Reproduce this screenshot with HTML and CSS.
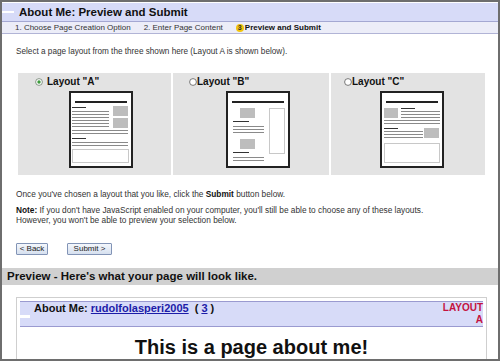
FILE: index.html
```html
<!DOCTYPE html>
<html>
<head>
<meta charset="utf-8">
<title>About Me: Preview and Submit</title>
<link rel="stylesheet" href="styles.css">
</head>
<body>
<div class="frame">
  <div class="hdr"><span class="stripe"></span><h1 class="title">About Me: Preview and Submit</h1></div>
  <div class="steps">
    <span>1. Choose Page Creation Option</span>
    <span>2. Enter Page Content</span>
    <span class="cur"><span class="num">3</span>Preview and Submit</span>
  </div>
  <p class="intro">Select a page layout from the three shown here (Layout A is shown below).</p>

  <div class="layouts">
    <div class="panel p1">
      <label class="opt">
        <svg class="radio" width="8" height="8" viewBox="0 0 8 8"><circle cx="4" cy="4" r="3.4" fill="#fff" stroke="#7a8a7a" stroke-width="0.9"/><circle cx="4" cy="4" r="1.7" fill="#3c9a3c"/></svg>
        <span>Layout "A"</span>
      </label>
      <div class="thumb">
        <svg width="64" height="77" viewBox="0 0 64 77" shape-rendering="crispEdges">
          <rect x="1" y="1" width="62" height="75" fill="#fff" stroke="#222" stroke-width="2"/>
          <rect x="6" y="10" width="52" height="2" fill="#222"/>
          <rect x="3" y="16" width="14" height="1" fill="#333"/>
          <rect x="3" y="20" width="37" height="1" fill="#8a8a8a"/>
          <rect x="3" y="23" width="37" height="1" fill="#8a8a8a"/>
          <rect x="3" y="26" width="37" height="1" fill="#8a8a8a"/>
          <rect x="3" y="29" width="37" height="1" fill="#8a8a8a"/>
          <rect x="3" y="32" width="37" height="1" fill="#8a8a8a"/>
          <rect x="3" y="35" width="37" height="1" fill="#8a8a8a"/>
          <rect x="44" y="15" width="15" height="10" fill="#bdbdbd"/>
          <rect x="44" y="27" width="15" height="10" fill="#bdbdbd"/>
          <rect x="3" y="39" width="56" height="1" fill="#8a8a8a"/>
          <rect x="3" y="42" width="56" height="1" fill="#8a8a8a"/>
          <rect x="3" y="47" width="14" height="1" fill="#333"/>
          <rect x="3" y="51" width="56" height="1" fill="#8a8a8a"/>
          <rect x="3" y="54" width="56" height="1" fill="#8a8a8a"/>
          <rect x="3.5" y="58.5" width="56" height="13" fill="none" stroke="#c8c8c8"/>
        </svg>
      </div>
    </div>
    <div class="panel p2">
      <label class="opt">
        <svg class="radio" width="8" height="8" viewBox="0 0 8 8"><circle cx="4" cy="4" r="3.4" fill="#fff" stroke="#6a6a6a" stroke-width="0.9"/></svg>
        <span>Layout "B"</span>
      </label>
      <div class="thumb">
        <svg width="64" height="77" viewBox="0 0 64 77" shape-rendering="crispEdges">
          <rect x="1" y="1" width="62" height="75" fill="#fff" stroke="#222" stroke-width="2"/>
          <rect x="6" y="10" width="52" height="2" fill="#222"/>
          <rect x="14" y="17" width="15" height="10" fill="#bdbdbd"/>
          <rect x="7" y="30" width="16" height="1" fill="#333"/>
          <rect x="7" y="35" width="31" height="1" fill="#8a8a8a"/>
          <rect x="7" y="38" width="31" height="1" fill="#8a8a8a"/>
          <rect x="7" y="41" width="31" height="1" fill="#8a8a8a"/>
          <rect x="43.5" y="17.5" width="15" height="45" fill="none" stroke="#c8c8c8"/>
          <rect x="14" y="48" width="15" height="10" fill="#bdbdbd"/>
          <rect x="7" y="61" width="16" height="1" fill="#333"/>
          <rect x="7" y="66" width="31" height="1" fill="#8a8a8a"/>
          <rect x="7" y="69" width="31" height="1" fill="#8a8a8a"/>
        </svg>
      </div>
    </div>
    <div class="panel p3">
      <label class="opt">
        <svg class="radio" width="8" height="8" viewBox="0 0 8 8"><circle cx="4" cy="4" r="3.4" fill="#fff" stroke="#6a6a6a" stroke-width="0.9"/></svg>
        <span>Layout "C"</span>
      </label>
      <div class="thumb">
        <svg width="64" height="77" viewBox="0 0 64 77" shape-rendering="crispEdges">
          <rect x="1" y="1" width="62" height="75" fill="#fff" stroke="#222" stroke-width="2"/>
          <rect x="6" y="10" width="52" height="2" fill="#222"/>
          <rect x="4" y="17" width="14" height="10" fill="#bdbdbd"/>
          <rect x="21" y="17" width="14" height="1" fill="#333"/>
          <rect x="21" y="20" width="39" height="1" fill="#8a8a8a"/>
          <rect x="21" y="23" width="39" height="1" fill="#8a8a8a"/>
          <rect x="21" y="26" width="39" height="1" fill="#8a8a8a"/>
          <rect x="4" y="29" width="56" height="1" fill="#8a8a8a"/>
          <rect x="4" y="32" width="56" height="1" fill="#8a8a8a"/>
          <rect x="4" y="37" width="14" height="1" fill="#333"/>
          <rect x="4" y="40" width="39" height="1" fill="#8a8a8a"/>
          <rect x="4" y="43" width="39" height="1" fill="#8a8a8a"/>
          <rect x="4" y="46" width="39" height="1" fill="#8a8a8a"/>
          <rect x="44" y="37" width="15" height="10" fill="#bdbdbd"/>
          <rect x="4.5" y="52.5" width="55" height="19" fill="none" stroke="#c8c8c8"/>
        </svg>
      </div>
    </div>
  </div>

  <p class="txt once">Once you've chosen a layout that you like, click the <b>Submit</b> button below.</p>
  <p class="txt note"><b>Note:</b> If you don't have JavaScript enabled on your computer, you'll still be able to choose any of these layouts.<br>However, you won't be able to preview your selection below.</p>

  <div class="btns">
    <button class="btn back" type="button">&lt; Back</button>
    <button class="btn submit" type="button">Submit &gt;</button>
  </div>

  <div class="pvbar">Preview - Here's what your page will look like.</div>

  <div class="pvbox">
    <div class="pvhead">
      <span class="stripe2"></span>
      <div class="pvtitle">About Me: <a href="#" class="lnk">rudolfolasperi2005</a><span class="paren">( <a href="#" class="lnk">3</a> )</span></div>
      <div class="lay">LAYOUT<br>A</div>
    </div>
    <h2 class="big">This is a page about me!</h2>
  </div>
</div>
</body>
</html>
```

FILE: styles.css
```css
* { box-sizing: border-box; margin: 0; padding: 0; }
body { margin: 0; font-family: "Liberation Sans", Arial, sans-serif; color: #222; background: #fff; }

.frame { width: 500px; height: 361px; border: 2px solid #6e6e6e; overflow: hidden; background: #fff; }

.hdr { margin-top: 1px; height: 19px; background: #d7dbf8; border-bottom: 1px solid #a4a8d2; display: flex; align-items: center; }
.stripe { width: 12px; height: 2px; background: #fff; flex: none; }
.title { font-size: 11.5px; font-weight: bold; margin-left: 5px; color: #111; line-height: 14px; }

.steps { height: 12px; background: #ecedf8; border-bottom: 1px solid #b1b4d6; display: flex; align-items: center; padding-left: 13px; gap: 13px; font-size: 8px; line-height: 11px; color: #333; }
.cur { display: flex; align-items: center; font-weight: bold; color: #111; }
.num { width: 8px; height: 8px; border-radius: 50%; background: #f2c40c; font-size: 7px; line-height: 8px; text-align: center; margin-right: 1px; color: #333; font-weight: bold; }

.intro { font-size: 8.2px; line-height: 10px; margin: 13px 0 0 14px; color: #333; }

.layouts { display: grid; grid-template-columns: 153px 156px 154px; gap: 2px; margin: 16px 0 0 16px; }
.panel { background: #e3e3e3; height: 102px; padding-top: 4px; }
.opt { display: flex; align-items: center; height: 10px; font-size: 10px; font-weight: bold; color: #111; line-height: 10px; }
.p1 .opt { padding-left: 17px; gap: 4px; }
.p2 .opt { padding-left: 16px; gap: 0; }
.p3 .opt { padding-left: 13px; gap: 0; }
.radio { flex: none; display: block; }
.thumb { display: flex; justify-content: center; padding-left: 13px; margin-top: 4px; }
.thumb svg { display: block; }
.p3 .thumb { padding-left: 8px; }

.txt { font-size: 8.3px; line-height: 10px; margin-left: 14px; color: #333; }
.txt b { color: #111; }
.once { margin-top: 14px; }
.note { margin-top: 6px; }

.btns { display: flex; gap: 19px; margin: 18px 0 0 14px; }
.btn { height: 12px; font-family: "Liberation Sans", Arial, sans-serif; font-size: 8px; line-height: 10px; color: #222; background: linear-gradient(#f4f7fc, #d6e0ef); border: 1px solid #8294b6; border-radius: 1px; padding: 0; }
.back { width: 32px; }
.submit { width: 45px; }

.pvbar { margin-top: 13px; height: 17px; background: #d0d0d0; font-size: 11.5px; font-weight: bold; line-height: 17px; padding-left: 5px; color: #111; }

.pvbox { margin: 12px 0 0 14px; width: 471px; height: 80px; border: 1px solid #cfcfcf; border-bottom: none; padding: 3px 3px 0 3px; }
.pvhead { display: flex; align-items: flex-start; height: 26px; background: #d7dbf8; border-top: 1px solid #9a9ad0; border-bottom: 1px solid #9a9ad0; }
.stripe2 { width: 10px; height: 3px; background: #fff; flex: none; margin-top: 13px; }
.pvtitle { flex: 1; margin-left: 4px; font-size: 11px; font-weight: bold; line-height: 13px; color: #111; }
.lnk { color: #1c1ca8; text-decoration: underline; }
.paren { margin-left: 6px; }
.lay { font-size: 10px; font-weight: bold; line-height: 12px; color: #c4123f; text-align: right; }
.big { margin-top: 9px; font-size: 20px; line-height: 23px; font-weight: bold; text-align: center; color: #111; }
```
